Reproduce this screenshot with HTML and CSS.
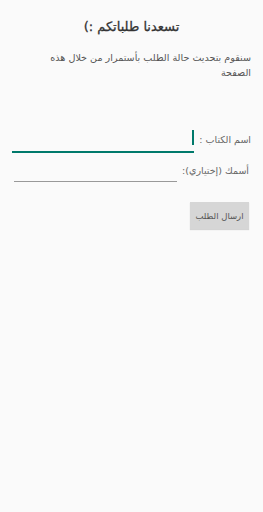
FILE: index.html
```html
<!DOCTYPE html>
<html lang="ar" dir="rtl">
<head>
<meta charset="utf-8">
<link rel="stylesheet" href="styles.css">
</head>
<body>
<div class="page">
  <h1 class="title">تسعدنا طلباتكم :)</h1>
  <p class="intro">سنقوم بتحديث حالة الطلب بأستمرار من خلال هذه الصفحة</p>
  <div class="form">
    <div class="row row-book">
      <label class="label">اسم الكتاب :</label>
      <div class="field active"><span class="cursor"></span></div>
    </div>
    <div class="row row-name">
      <label class="label">أسمك (إختياري):</label>
      <div class="field"></div>
    </div>
    <div class="actions">
      <button class="btn">ارسال الطلب</button>
    </div>
  </div>
</div>
</body>
</html>
```
FILE: styles.css
```css
html, body {
  margin: 0;
  padding: 0;
  background: #fafafa;
  font-family: "DejaVu Sans", "Noto Sans", sans-serif;
}
.page {
  width: 263px;
  height: 512px;
  box-sizing: border-box;
  padding: 16px 12px 0 12px;
}
.title {
  margin: 0;
  text-align: center;
  font-size: 13px;
  font-weight: normal;
  color: #333;
  line-height: 22px;
  -webkit-text-stroke: 0.3px #333;
}
.intro {
  margin: 12px 0 0 0;
  padding-left: 30px;
  font-size: 9.6px;
  line-height: 15px;
  color: #555;
}
.form {
  margin-top: 47px;
}
.row {
  display: flex;
  align-items: flex-end;
  gap: 5px;
}
.label {
  font-size: 9.5px;
  color: #666;
  white-space: nowrap;
}
.row-book .label {
  padding-bottom: 8px;
}
.field {
  flex: 1;
  height: 24px;
  border-bottom: 1px solid #999;
  position: relative;
}
.field.active {
  border-bottom: 2px solid #00796b;
}
.cursor {
  position: absolute;
  right: 0;
  top: 3px;
  width: 2px;
  height: 15px;
  background: #00796b;
}
.row-name {
  margin-top: 6px;
  padding-right: 2px;
}
.row-name .label {
  padding-bottom: 6px;
}
.row-name .field {
  height: 22px;
  flex: 0 0 163px;
}
.actions {
  margin-top: 20px;
  padding-right: 2px;
}
.btn {
  width: 59px;
  height: 27px;
  border: none;
  background: #d6d6d6;
  color: #555;
  font-family: inherit;
  font-size: 8.5px;
  padding: 0;
  box-shadow: 0 1px 1px rgba(0,0,0,0.15);
}
```
